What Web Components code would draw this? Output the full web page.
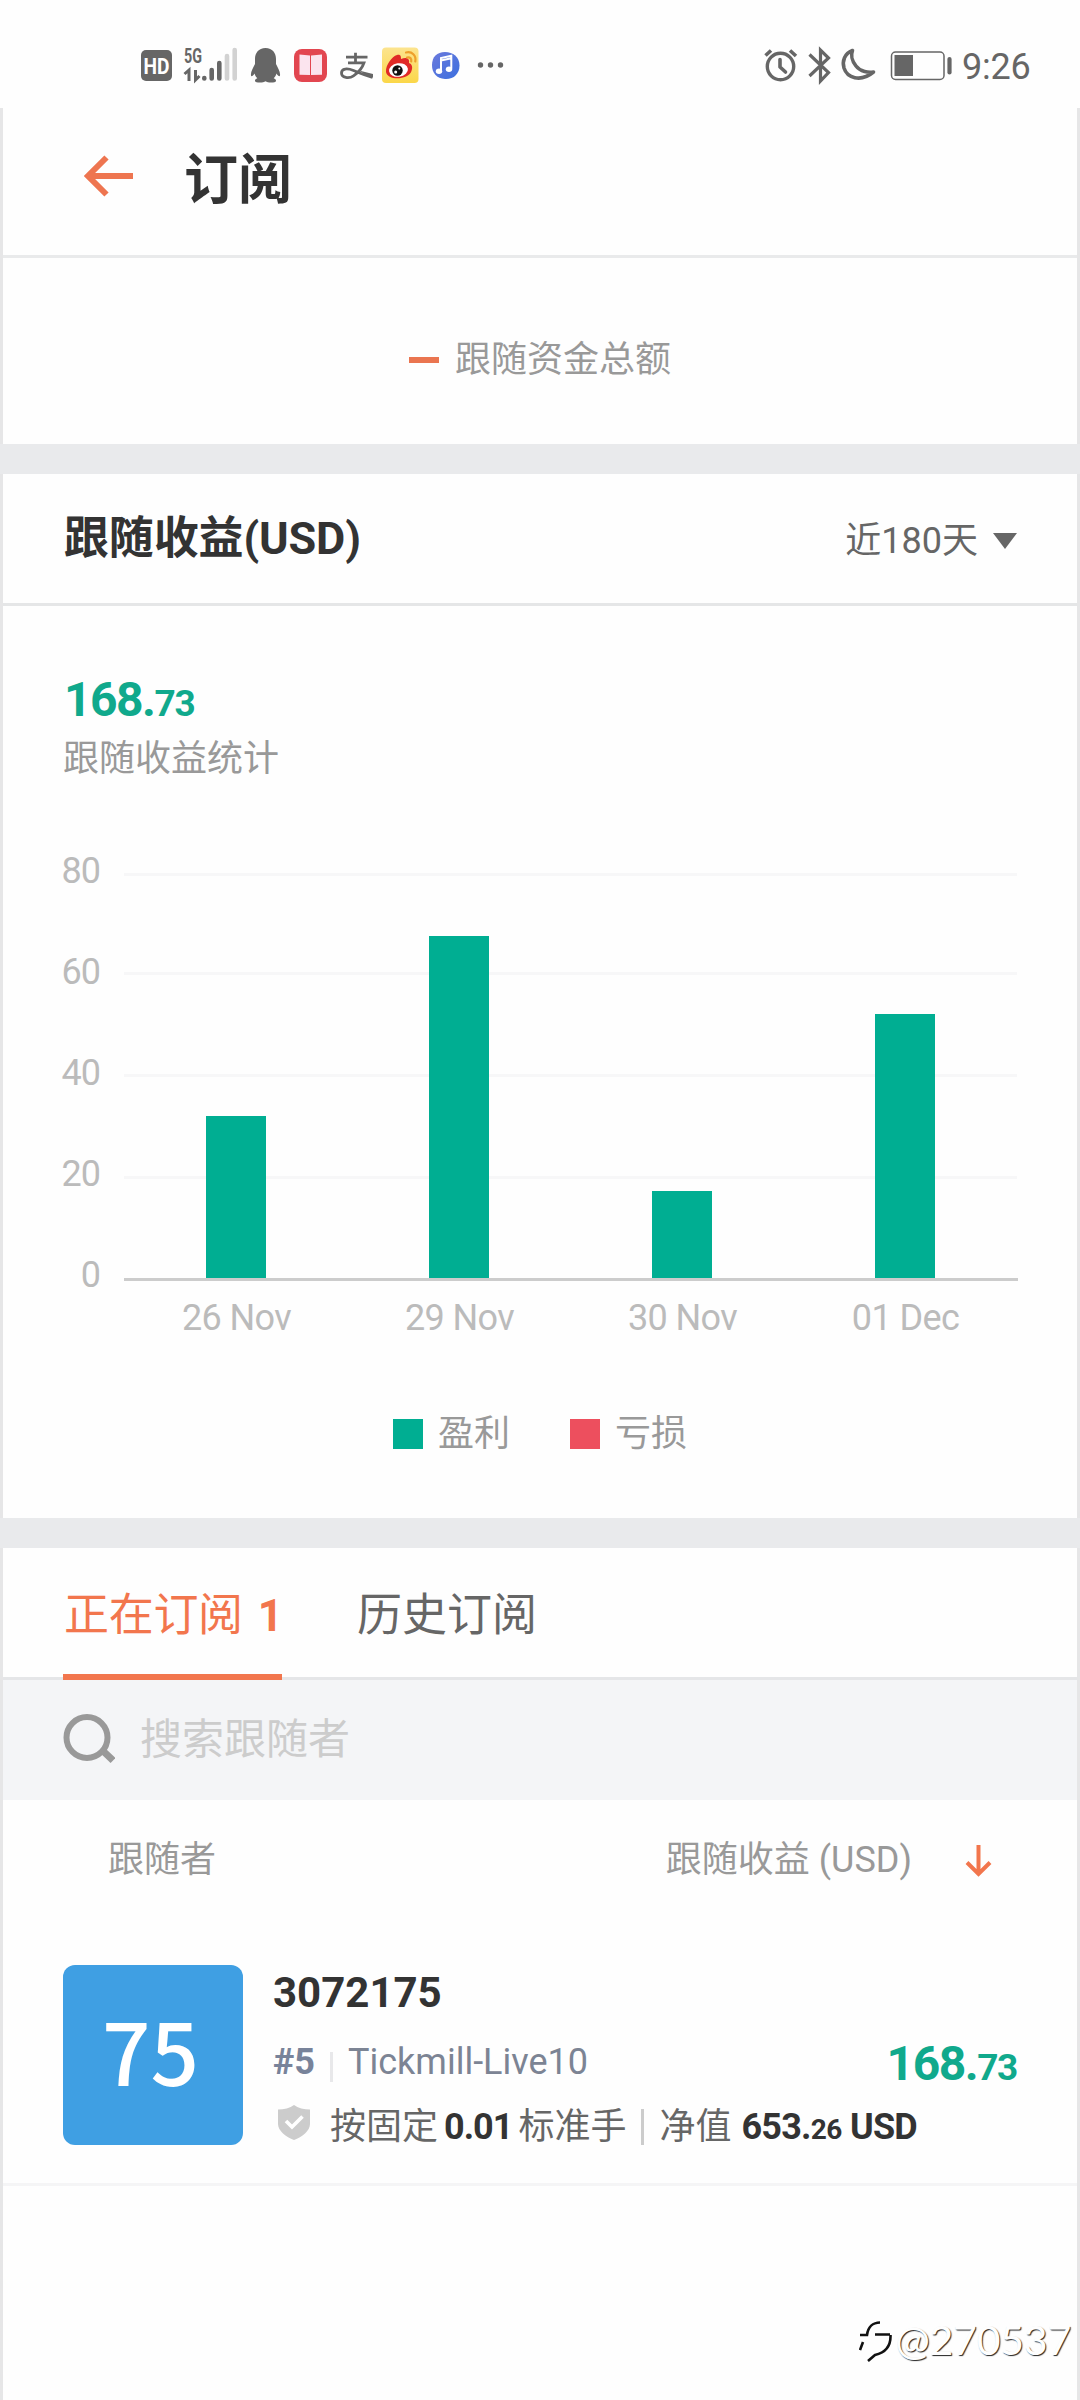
<!DOCTYPE html>
<html lang="zh-CN">
<head>
<meta charset="utf-8">
<title>订阅</title>
<style>
html,body{margin:0;padding:0;background:#fefefe}
body{width:1080px;height:2400px;overflow:hidden;font-family:Roboto,"Noto Sans CJK SC",sans-serif;color:#333}
</style>
</head>
<body>
<copy-app></copy-app>
<script>
const define = (name, html) => {
  const t = document.createElement('template');
  t.innerHTML = html;
  customElements.define(name, class extends HTMLElement {
    constructor() {
      super();
      this.attachShadow({ mode: 'open' }).appendChild(t.content.cloneNode(true));
    }
  });
};

/* ---------- system status bar ---------- */
define('status-bar', `
<style>
:host{display:flex;height:108px;box-sizing:border-box;padding:0 50px 0 140px;justify-content:space-between;color:#666}
svg{display:block}
.r{display:flex}
.t{font-size:36px;line-height:42px;margin-top:45.500px;letter-spacing:-.2px;width:68px;white-space:nowrap}
</style>
<svg width="370" height="108" viewBox="140 0 370 108">
  <rect x="141" y="50" width="31" height="31" rx="5" fill="#666"/>
  <text x="156.5" y="73.500" font-family="Roboto" font-weight="700" font-size="22" text-anchor="middle" fill="#fff" textLength="26" lengthAdjust="spacingAndGlyphs">HD</text>
  <text x="184" y="62.5" font-family="Roboto" font-weight="700" font-size="20" fill="#666" textLength="18" lengthAdjust="spacingAndGlyphs">5G</text>
  <path d="M184.500 74l4.500-4v11M195.500 70v10l4-4" fill="none" stroke="#666" stroke-width="3"/>
  <g stroke-width="4.600" stroke-linecap="round" stroke="#666">
    <path d="M204.300 78v.5M211.700 70v8.500M219.300 63v15.500"/>
    <path d="M227 56v22.500M234.700 50v28.500" stroke="#d2d2d2"/>
  </g>
  <path d="M265.500 48c-7 0-10.500 5-10.500 11v5c-2 4-4.500 8-4 11.500.3 1.500 2 .5 3.500-2 .6 2 1.600 3.500 2.800 4.700-1.500.6-2.500 1.500-2.300 2.800.3 2 8.500 2 10.500.2 2 1.800 10.200 1.800 10.500-.2.200-1.300-.8-2.200-2.300-2.800 1.200-1.200 2.200-2.700 2.800-4.700 1.500 2.500 3.200 3.500 3.500 2 .5-3.500-2-7.500-4-11.500v-5c0-6-3.500-11-10.500-11z" fill="#666"/>
  <rect x="294" y="49" width="33" height="33" rx="8" fill="#e24650"/>
  <path d="M299.500 54.500l10.500 1v19.500l-10.500-.2zM311 55.500l11-1v20.300l-11 .2z" fill="#fbe4ee"/>
  <path d="M346 57.200h21.500M355.500 52.700v10M348 62.800h16c-2 6-6 10-10.500 13s-12 2-12-2.800 6-5 12-2.500 12 5 19 6.800" fill="none" stroke="#666" stroke-width="2.800"/>
  <path d="M359 70.500l14 3.500v3.500l-5-1z" fill="#666"/>
  <defs><linearGradient id="w" x2="0" y2="1"><stop stop-color="#fce48f"/><stop offset="1" stop-color="#fbd749"/></linearGradient></defs>
  <rect x="382" y="47.500" width="36.500" height="35.500" rx="4" fill="url(#w)"/>
  <path d="M397 55c4-1 4 2 4 4 5-2 9-1 8 4 3 1 4 4 2.500 8-3 9-24 10-25.500 1-.5-7 6-15.500 11-17z" fill="#e02a27"/>
  <ellipse cx="398.500" cy="70" rx="9.500" ry="6.800" fill="#fff" transform="rotate(-8 398.500 70)"/>
  <circle cx="397.500" cy="70.500" r="5.200" fill="#111"/>
  <circle cx="395.700" cy="72" r="1.500" fill="#fff"/><circle cx="399.300" cy="68.500" r="1" fill="#fff"/>
  <path d="M406 52.500c6-1.500 10.500 3 9.300 9M407 57.500c3-.8 4.800 1.200 4.200 4" fill="none" stroke="#eea02c" stroke-width="2.200" stroke-linecap="round"/>
  <defs><linearGradient id="m" y2="1"><stop stop-color="#6b79dc"/><stop offset="1" stop-color="#3c70df"/></linearGradient></defs>
  <path d="M432 65c0-8 5-13 13-13s14.500 5 14.500 13.500-6 14-14.500 13.500-13-6-13-14z" fill="url(#m)"/>
  <path d="M441 71v-13l10.300-2.200v13M441 60.500l10.300-2.200" fill="none" stroke="#fff" stroke-width="2"/>
  <ellipse cx="439" cy="71.300" rx="3.200" ry="2.700" fill="#fff"/><ellipse cx="449" cy="69.300" rx="3.200" ry="2.700" fill="#fff"/>
  <g fill="#666"><circle cx="480.500" cy="65" r="2.700"/><circle cx="490.500" cy="65" r="2.700"/><circle cx="500.500" cy="65" r="2.700"/></g>
</svg>
<div class="r">
<svg width="200" height="108" viewBox="762 0 200 108" fill="none" stroke="#666">
  <circle cx="780.500" cy="66.500" r="13.200" stroke-width="3.400"/>
  <path d="M780 59.500v7.500l5.500 5" stroke-width="3.600" stroke-linecap="round" stroke-linejoin="round"/>
  <path d="M765.500 55.500l5.500-5M790 50.500l6 5.500" stroke-width="3.600"/>
  <path d="M809.500 54.500l19 18-8 8.500V50l8 8-19 18" stroke-width="3.200"/>
  <path d="M852.500 50.500c-8 3-10.500 10.500-8.500 17.500 3 9.500 16 15 29.500 4-5 .8-13 0-17.500-6s-5.500-10-3.500-15.500z" stroke-width="3.600" stroke-linejoin="round"/>
  <rect x="891.500" y="52" width="52.500" height="27.500" rx="4" stroke-width="1.500"/>
  <rect x="894.500" y="55" width="18.500" height="21" fill="#666" stroke="none"/>
  <path d="M949.500 59v13.500" stroke-width="4.200" stroke-linecap="round"/>
</svg>
<div class="t">9:26</div>
</div>`);

/* ---------- page header ---------- */
define('page-header', `
<style>
:host{display:flex;align-items:flex-start;height:147px;border-bottom:3px solid #e9eaeb;padding-left:81px}
svg{display:block;margin-top:47px}
h1{margin:40.500px 0 0 50px;font-size:54px;line-height:64px;font-weight:700;color:#333}
</style>
<svg width="50" height="42" viewBox="0 0 50 42" fill="none" stroke="#ee7550" stroke-width="6"><path d="M49 21H4M22.500 2.500L4 21l18.500 18.500"/></svg>
<h1><slot></slot></h1>`);

define('funds-legend', `
<style>
:host{display:flex;height:186px;align-items:center;padding:0 0 0 406px;font-size:36px;line-height:42px;color:#999}
i{width:30px;height:6px;background:#ea7550;margin:18px 15px 0 0}
span{margin:18px 0 0 1px}
</style><i></i><span><slot></slot></span>`);

define('gap-band', `<style>:host{display:block;height:30px;margin:0 -3px;background:#e9eaec}</style>`);

define('section-head', `
<style>
:host{display:flex;justify-content:space-between;align-items:center;height:129px;border-bottom:3px solid #e5e6e7;padding:0 59px 0 61px}
h2{margin:0;font-size:45px;line-height:54px;font-weight:700;letter-spacing:-.150px}
.s{display:flex;align-items:center;font-size:36px;line-height:42px;color:#666;gap:15px;padding-top:4px}
svg{display:block}
</style>
<h2><slot></slot></h2>
<div class="s"><slot name="range"></slot><svg width="25" height="16"><path d="M0 0h24L12 16z" fill="#666"/></svg></div>`);

/* amount with a smaller fraction part */
define('money-value', `
<style>
:host{display:inline-block;white-space:nowrap;font-weight:700;font-size:48px;line-height:56px;letter-spacing:-1.500px;color:#10a98c}
small{font-size:37px;letter-spacing:-1.300px}
</style><slot></slot><small><slot name="frac"></slot></small>`);

define('profit-summary', `
<style>
:host{display:flex;flex-direction:column;height:234px;padding:66px 60px 0 60px;box-sizing:border-box}
span{font-size:36px;line-height:42px;color:#999;margin-top:10px}
money-value{height:56px;margin-left:1px}
money-value span{all:unset}
</style><money-value>168.<span slot="frac">73</span></money-value><span><slot></slot></span>`);

/* ---------- bar chart ---------- */
customElements.define('bar-chart', class extends HTMLElement {
  connectedCallback() {
    const bars = [['26 Nov', 162], ['29 Nov', 342], ['30 Nov', 87], ['01 Dec', 264]];
    this.attachShadow({ mode: 'open' }).innerHTML = `
<style>
:host{display:grid;grid-template-columns:100px 21px 897px;grid-template-rows:441px 61px;height:502px;margin-left:-3px;font-size:36px;color:#bbb;line-height:42px}
.y{display:flex;flex-direction:column;text-align:right;gap:59px;padding-top:10px;letter-spacing:-1px}
.plot{grid-column:3;margin-left:3px;display:grid;grid-template:441px/894px}
.g,.b{grid-area:1/1}
.g{display:flex;flex-direction:column}
.g i{height:3px;background:#f7f7f8;margin-bottom:99px;flex:none;width:893px}
.g i:first-child{margin-top:33px;margin-bottom:96px}
.g i:last-child{background:#ccc;margin:0;width:894px}
.b{display:flex;gap:163px;padding:0 0 3px 82px;align-items:flex-end}
.b i{width:60px;background:#00ae92}
.x{grid-column:3;margin-left:3px;display:flex;padding:16px 0 0 1px}
.x span{width:223px;text-align:center;letter-spacing:-.6px}
</style>
<div class="y"><span>80</span><span>60</span><span>40</span><span>20</span><span>0</span></div>
<div class="plot"><div class="g"><i></i><i></i><i></i><i></i><i></i></div>
<div class="b">${bars.map(b => `<i style="height:${b[1]}px"></i>`).join('')}</div></div>
<div class="x">${bars.map(b => `<span>${b[0]}</span>`).join('')}</div>`;
  }
});

define('chart-legend', `
<style>
:host{display:flex;height:176px;box-sizing:border-box;padding:71px 0 0 390px;font-size:36px;line-height:42px;color:#999}
i{width:30px;height:30px;margin:6px 15px 0 0;background:#00ae92}
i.l{background:#ed4f5e;margin-left:60px}
</style><i></i><slot name="gain"></slot><i class="l"></i><slot name="loss"></slot>`);

/* ---------- tabs and search ---------- */
define('sub-tabs', `
<style>
:host{display:flex;height:129px;border-bottom:3px solid #e5e6e8;padding-left:60px;font-size:45px;line-height:54px;color:#666}
div{box-sizing:border-box;padding-top:40.500px;height:132px;white-space:nowrap}
.on{width:219px;border-bottom:6px solid #f2764d;color:#f2764d;margin-right:75px;padding-left:1px;letter-spacing:-.3px}
b{margin-left:15px;font-size:44px}
</style>
<div class="on"><slot name="active"></slot><b><slot name="count"></slot></b></div><div><slot name="other"></slot></div>`);

define('search-field', `
<style>
:host{display:flex;align-items:flex-start;height:120px;background:#f4f5f7;padding-left:60px;font-size:42px;line-height:50px;color:#ccc}
svg{display:block;margin:33px 25px 0 0;flex:none}
span{margin-top:35px}
</style>
<svg width="52" height="52" fill="none" stroke="#999" stroke-width="6"><circle cx="24" cy="24.500" r="20.500"/><path d="M38.500 36.500L50 47.500" stroke-width="7"/></svg><span><slot></slot></span>`);

define('list-head', `
<style>
:host{display:flex;height:165px;box-sizing:border-box;padding:39px 85px 0 105px;font-size:36px;line-height:42px;color:#999;justify-content:space-between}
div{display:flex}
svg{display:block;margin:6px 0 0 53px}
</style>
<slot name="left"></slot><div><slot name="right"></slot><svg width="27" height="32" viewBox="0 0 27 32" fill="none" stroke="#f2764d" stroke-width="4"><path d="M13.500 0v28M2 17.500L13.500 29 25 17.500"/></svg></div>`);

/* ---------- follower row ---------- */
define('follower-row', `
<style>
:host{display:flex;height:218px;border-bottom:3px solid #f5f5f6;padding:0 60px}
.av{width:180px;height:180px;border-radius:12px;background:#3f9fe3;color:#fff;font:500 85px/168px "Noto Sans CJK SC",sans-serif;text-align:center;flex:none;box-sizing:border-box;padding-right:5px}
.m{flex:1;display:grid;grid-template-columns:1fr auto;grid-template-rows:53px 76px 60px;padding-left:30px;font-size:36px;line-height:42px;color:#666}
.n{grid-column:1/3;font-size:42px;line-height:50px;font-weight:700;color:#333;padding-top:3px}
.a{display:flex;padding-top:23px;color:#78839a}
.a i{width:3px;height:30px;background:#e8e8ea;margin:11px 15px 0 15px}
.a span{color:#7c8494}
.p{display:flex;padding-top:18px}
.d{grid-column:1/3;display:flex;white-space:nowrap;padding-top:12px}
.d b{color:#333;letter-spacing:-1px}
.d small{font-size:28px;letter-spacing:-.5px}
.d svg{display:block;margin:-1px 20px 0 5px}
.d i{width:3px;height:36px;background:#ccc;margin:3px 15px 0 15px}
.d .lot{margin:0 6px 0 6px}
.d .eq{margin-left:10px;letter-spacing:-.8px}
</style>
<div class="av">75</div>
<div class="m">
 <div class="n">3072175</div>
 <div class="a"><b>#5</b><i></i><span>Tickmill-Live10</span></div>
 <div class="p"><money-value>168.<span slot="frac">73</span></money-value></div>
 <div class="d"><svg width="32" height="35" viewBox="0 0 32 35"><path d="M16 0c4 3 10 4.500 16 4.500V19c0 7-8 13-16 16C8 32 0 26 0 19V4.500C6 4.500 12 3 16 0z" fill="#ccc"/><path d="M8 16l6 6 10.500-10.500" fill="none" stroke="#fff" stroke-width="3.600"/></svg>
 <span>按固定</span><b class="lot">0.01</b><span>标准手</span><i></i><span>净值</span><b class="eq">653.<small>26</small> USD</b></div>
</div>`);

/* watermark laid over the page corner */
define('water-mark', `
<style>
:host{position:absolute;right:9px;top:2315px;display:flex;align-items:center;color:#fefefe;font:400 41px/50px Lato,sans-serif;letter-spacing:-.2px;text-shadow:1px 1px 1px #222}
svg{display:block;margin:6px 2px 0 0}
</style>
<svg width="34" height="44" fill="none"><g stroke="#111" stroke-width="2.600"><path d="M1 14h7C9 6 14 1.500 21 1.500M16 13.500h15M31.500 14C32 26 25 32 16 34L9 40M1 29l3-8"/></g></svg><span><slot></slot></span>`);

define('copy-app', `
<style>
:host{display:block;width:1080px;height:2400px}
main{box-sizing:border-box;height:2292px;border:solid #e6e6e7;border-width:0 3px}
</style>
<status-bar></status-bar>
<main>
<page-header>订阅</page-header>
<funds-legend>跟随资金总额</funds-legend>
<gap-band></gap-band>
<section-head>跟随收益(USD)<span slot="range">近180天</span></section-head>
<profit-summary>跟随收益统计</profit-summary>
<bar-chart></bar-chart>
<chart-legend><span slot="gain">盈利</span><span slot="loss">亏损</span></chart-legend>
<gap-band></gap-band>
<sub-tabs><span slot="active">正在订阅</span><span slot="count">1</span><span slot="other">历史订阅</span></sub-tabs>
<search-field>搜索跟随者</search-field>
<list-head><span slot="left">跟随者</span><span slot="right">跟随收益 (USD)</span></list-head>
<follower-row></follower-row>
</main>
<water-mark>@270537</water-mark>`);
</script>
</body>
</html>
